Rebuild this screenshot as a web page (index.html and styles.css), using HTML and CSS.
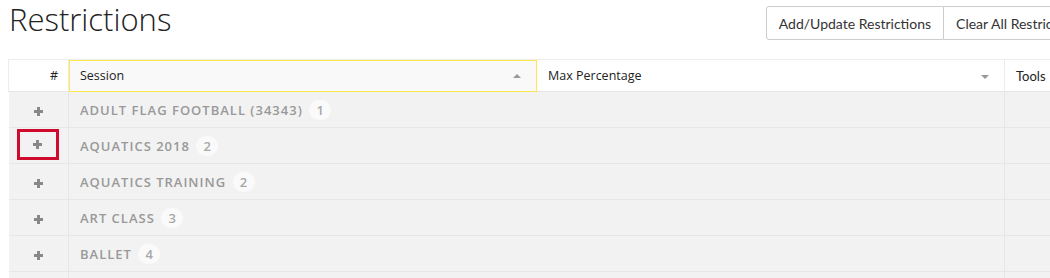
FILE: index.html
```html
<!DOCTYPE html>
<html lang="en">
<head>
<meta charset="UTF-8" />
<title>Restrictions</title>
<link rel="stylesheet" href="styles.css">
</head>
<body>

<div class="page-head">
  <h1>Restrictions</h1>
  <div class="btn-group">
    <button class="btn">Add/Update Restrictions</button>
    <button class="btn">Clear All Restrictions</button>
  </div>
</div>

<table class="grid">
  <colgroup>
    <col class="c-num">
    <col class="c-session">
    <col class="c-max">
    <col class="c-tools">
  </colgroup>
  <thead>
    <tr>
      <th class="num">#</th>
      <th class="sortable focused">Session <span class="arrow up"></span></th>
      <th class="sortable">Max Percentage <span class="arrow down"></span></th>
      <th>Tools</th>
    </tr>
  </thead>
  <tbody>
    <tr class="group">
      <td class="toggle"><span class="plus"></span></td>
      <td colspan="2">ADULT FLAG FOOTBALL (34343) <span class="badge">1</span></td>
      <td></td>
    </tr>
    <tr class="group">
      <td class="toggle"><span class="marked"><span class="plus"></span></span></td>
      <td colspan="2">AQUATICS 2018 <span class="badge">2</span></td>
      <td></td>
    </tr>
    <tr class="group">
      <td class="toggle"><span class="plus"></span></td>
      <td colspan="2">AQUATICS TRAINING <span class="badge">2</span></td>
      <td></td>
    </tr>
    <tr class="group">
      <td class="toggle"><span class="plus"></span></td>
      <td colspan="2">ART CLASS <span class="badge">3</span></td>
      <td></td>
    </tr>
    <tr class="group">
      <td class="toggle"><span class="plus"></span></td>
      <td colspan="2">BALLET <span class="badge">4</span></td>
      <td></td>
    </tr>
    <tr class="group">
      <td class="toggle"><span class="plus"></span></td>
      <td colspan="2">BASKETBALL <span class="badge">2</span></td>
      <td></td>
    </tr>
  </tbody>
</table>

</body>
</html>
```

FILE: styles.css
```css
html, body {
  margin: 0;
  background: #fff;
  overflow: hidden;
}
body {
  padding: 0 8px;
  font-family: "Open Sans", sans-serif;
  color: #222;
}

.page-head {
  display: flex;
  align-items: flex-start;
  height: 59px;
}
h1 {
  margin: 0;
  padding: 0 1px;
  font-weight: 300;
  font-size: 31px;
  line-height: 38px;
  color: #222;
}
.btn-group {
  display: flex;
  flex-shrink: 0;
  margin-top: 6px;
  margin-left: auto;
  margin-right: -54px;
}
.btn {
  font-family: Lato, sans-serif;
  font-size: 14px;
  color: #333;
  background: #fff;
  border: 1px solid #ccc;
  height: 34px;
  padding: 0 12px;
  white-space: nowrap;
  cursor: pointer;
}
.btn:first-child {
  border-radius: 3px 0 0 3px;
}
.btn + .btn {
  border-left: none;
}

.grid {
  border-collapse: collapse;
  table-layout: fixed;
  width: 1120px;
}
.c-num { width: 60px; }
.c-session { width: 468px; }
.c-max { width: 468px; }
.c-tools { width: 124px; }

.grid th {
  height: 31px;
  padding: 0 11px;
  text-align: left;
  font-weight: 400;
  font-size: 12.5px;
  color: #222;
  border: 1px solid #ececec;
  border-width: 1px 1px 0 1px;
  background: #fff;
  position: relative;
}
.grid th.num {
  text-align: right;
  padding-right: 10px;
}
.grid th.focused {
  background: #f9f9f9;
  outline: 1px solid #ffe94a;
  outline-offset: -1px;
}
.grid th:last-child {
  font-family: Lato, sans-serif;
  font-size: 13px;
}
.arrow {
  position: absolute;
  right: 15px;
  top: 14px;
  width: 0;
  height: 0;
  border-left: 4px solid transparent;
  border-right: 4px solid transparent;
}
.arrow.up {
  border-bottom: 4px solid #999;
}
.arrow.down {
  top: 15px;
  border-top: 4px solid #999;
}

.grid td {
  height: 35px;
  padding: 0 11px;
  background: #f2f2f2;
  border: 1px solid #e6e6e6;
  border-width: 1px 1px 0 1px;
  font-weight: 600;
  font-size: 13px;
  letter-spacing: 1px;
  color: #999;
  white-space: nowrap;
}
.grid td.toggle {
  padding: 0;
  text-align: center;
  border-left-color: #fff;
}
.plus {
  display: inline-block;
  position: relative;
  width: 9px;
  height: 9px;
  vertical-align: middle;
}
.plus::before,
.plus::after {
  content: "";
  position: absolute;
  background: #888;
}
.plus::before {
  left: 0;
  top: 3px;
  width: 9px;
  height: 3px;
}
.plus::after {
  left: 3px;
  top: 0;
  width: 3px;
  height: 9px;
}
.marked {
  display: inline-flex;
  align-items: center;
  justify-content: center;
  width: 36px;
  height: 25px;
  margin-left: -2px;
  margin-top: -2px;
  border: 3px solid #cf0a2c;
  vertical-align: middle;
}
.badge {
  display: inline-block;
  margin-left: 2px;
  padding: 0 7px;
  min-width: 8px;
  line-height: 20px;
  border-radius: 10px;
  background: #fafafa;
  color: #a8a8a8;
  font-weight: 600;
  letter-spacing: 0;
  text-align: center;
}
```
